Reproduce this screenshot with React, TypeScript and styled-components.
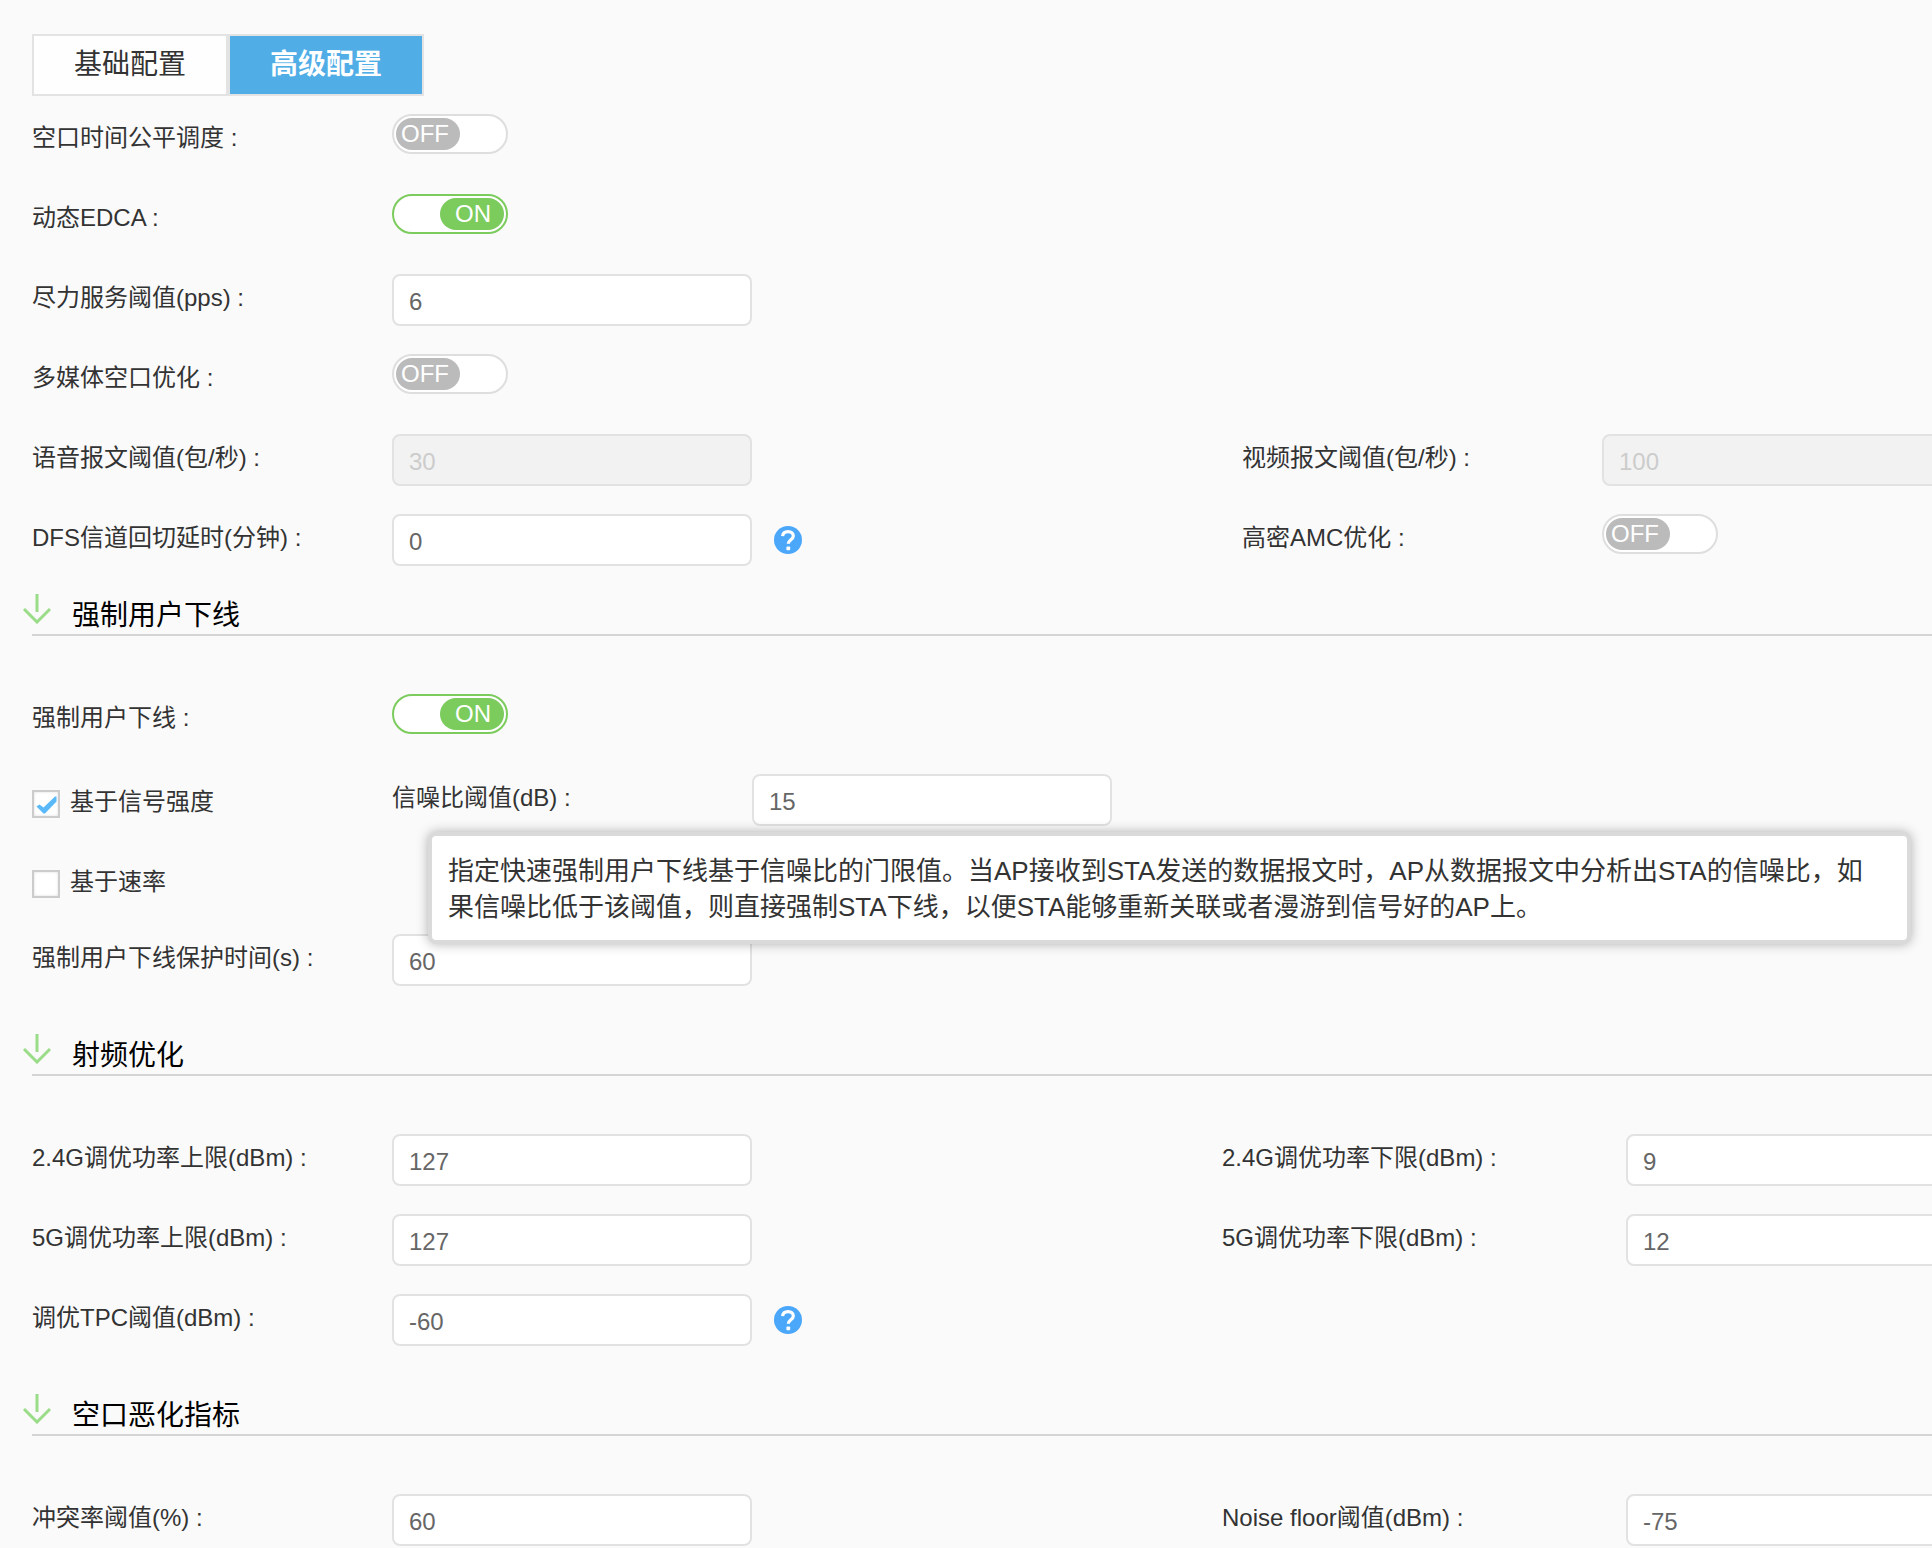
import { useId, useState, type ReactNode } from 'react';
import styled, { createGlobalStyle } from 'styled-components';

const GlobalStyle = createGlobalStyle`
  *, *::before, *::after { box-sizing: border-box; }
  html { min-height: 100%; background: #fafafa; }
  body {
    margin: 0;
    overflow-x: hidden;
    color: #333;
    font-family: "Liberation Sans", "Noto Sans CJK SC", sans-serif;
    font-size: 24px;
    line-height: 36px;
  }
  button, input { font: inherit; }
`;

const Page = styled.main`
  padding: 34px 0 0 32px;
  overflow: hidden;
`;

const Tabs = styled.nav`
  display: flex;
  margin-bottom: 18px;
`;

const Tab = styled.button<{ $active?: boolean }>`
  width: 196px;
  height: 62px;
  padding: 0;
  border: 2px solid #e3e3e3;
  background: ${(p) => (p.$active ? '#51ade6' : '#fefefe')};
  color: ${(p) => (p.$active ? '#fff' : '#333')};
  font-size: 28px;
  font-weight: ${(p) => (p.$active ? 700 : 400)};
  cursor: pointer;
`;

const Row = styled.div<{ $columns?: string }>`
  display: grid;
  grid-template-columns: ${(p) => p.$columns ?? '121fr 69fr'};
  height: 80px;
`;

const FieldBox = styled.div<{ $labelWidth: number }>`
  display: grid;
  grid-template-columns: ${(p) => p.$labelWidth}px auto;
  justify-content: start;
  align-items: start;
  min-width: 0;
`;

const FieldLabel = styled.label`
  line-height: 48px;
  white-space: nowrap;
`;

const Controls = styled.div`
  display: flex;
  align-items: center;
  gap: 22px;
`;

const TextInput = styled.input`
  flex: none;
  width: 360px;
  height: 52px;
  padding: 4px 15px 0;
  border: 2px solid #e2e2e2;
  border-radius: 8px;
  outline: none;
  background: #fff;
  color: #666;
  &:disabled {
    background: #f2f2f2;
    color: #ccc;
  }
`;

const SwitchTrack = styled.button<{ $on: boolean }>`
  display: flex;
  justify-content: ${(p) => (p.$on ? 'flex-end' : 'flex-start')};
  width: 116px;
  height: 40px;
  padding: 2px;
  border: 2px solid ${(p) => (p.$on ? '#7bcb5d' : '#dedede')};
  border-radius: 20px;
  background: #fff;
  cursor: pointer;
`;

const SwitchKnob = styled.span<{ $on: boolean }>`
  width: 64px;
  height: 32px;
  padding-left: ${(p) => (p.$on ? 15 : 5)}px;
  border-radius: 16px;
  background: ${(p) => (p.$on ? '#7bcb5d' : '#bbb')};
  color: #fff;
  line-height: 32px;
  text-align: left;
`;

const HelpButton = styled.button`
  display: flex;
  padding: 0;
  border: 0;
  background: none;
  cursor: pointer;
`;

const SectionHead = styled.h2<{ $gap: number }>`
  display: flex;
  align-items: flex-start;
  gap: 20px;
  height: 42px;
  margin: ${(p) => p.$gap}px 0 58px;
  border-bottom: 2px solid #d4d4d4;
  color: #000;
  font-size: 28px;
  font-weight: 400;
  line-height: 43px;
  svg { flex: none; margin-left: -10px; }
`;

const CheckLabel = styled.label`
  display: flex;
  align-items: center;
  gap: 10px;
  width: 360px;
  height: 28px;
  margin-top: 16px;
  cursor: pointer;
`;

const CheckBox = styled.span`
  position: relative;
  width: 28px;
  height: 28px;
  border: 2px solid #ccc;
  background: #fff;
  box-shadow: inset 0 0 3px #ddd;
  input {
    position: absolute;
    inset: 0;
    width: 100%;
    height: 100%;
    margin: 0;
    opacity: 0;
  }
  svg { display: none; }
  input:checked + svg { display: block; }
`;

const CheckText = styled.span`
  line-height: 28px;
  padding-bottom: 4px;
`;

const CheckRow = styled.div`
  position: relative;
  display: flex;
  align-items: flex-start;
  height: 80px;
`;

const Tooltip = styled.div`
  position: absolute;
  z-index: 1;
  top: 58px;
  left: 396px;
  right: 21px;
  padding: 17px 20px 15px 16px;
  border: 4px solid #dadada;
  border-radius: 8px;
  background: #fff;
  box-shadow: 0 0 12px rgba(0, 0, 0, 0.3);
  font-size: 26px;
`;

function Field({ label, labelWidth = 360, children }: { label: string; labelWidth?: number; children: (id: string) => ReactNode }) {
  const id = useId();
  return (
    <FieldBox $labelWidth={labelWidth}>
      <FieldLabel htmlFor={id}>{label} :</FieldLabel>
      <Controls>{children(id)}</Controls>
    </FieldBox>
  );
}

function InputField({ label, value, labelWidth, disabled, help }: { label: string; value: string; labelWidth?: number; disabled?: boolean; help?: boolean }) {
  return (
    <Field label={label} labelWidth={labelWidth}>
      {(id) => (
        <>
          <TextInput id={id} type="text" defaultValue={value} disabled={disabled} />
          {help && <Help />}
        </>
      )}
    </Field>
  );
}

function SwitchField({ label, initial = false }: { label: string; initial?: boolean }) {
  const [on, setOn] = useState(initial);
  return (
    <Field label={label}>
      {(id) => (
        <SwitchTrack id={id} type="button" role="switch" aria-checked={on} $on={on} onClick={() => setOn(!on)}>
          <SwitchKnob $on={on}>{on ? 'ON' : 'OFF'}</SwitchKnob>
        </SwitchTrack>
      )}
    </Field>
  );
}

function Help() {
  return (
    <HelpButton type="button" aria-label="帮助">
      <svg width="28" height="28" viewBox="0 0 28 28" fill="none">
        <circle cx="14" cy="14" r="14" fill="#4ba7f9" />
        <path d="M8.6 10.2C8.8 7.2 11 5.6 14.1 5.6c3.2 0 5.2 1.8 5.2 4.3 0 3.8-5 3.8-5 7.9" stroke="#fff" strokeWidth="3.2" />
        <rect x="12.4" y="20.4" width="3.8" height="3.8" rx="1" fill="#fff" />
      </svg>
    </HelpButton>
  );
}

function Section({ title, gap = 0 }: { title: string; gap?: number }) {
  return (
    <SectionHead $gap={gap}>
      <svg width="30" height="30" viewBox="0 0 30 30" fill="none" stroke="#9bdc88" strokeWidth="3">
        <path d="M15 0v18M2 15l13 13 13-13" />
      </svg>
      {title}
    </SectionHead>
  );
}

function Check({ label, checked }: { label: string; checked?: boolean }) {
  return (
    <CheckLabel>
      <CheckBox>
        <input type="checkbox" defaultChecked={checked} />
        <svg width="24" height="24" viewBox="0 0 24 24" fill="#5ab9f8">
          <path d="M2.5 14.5L5.5 12.5L9.5 15.5L21 4.5H22.5V9.5L11 21.5H9.5Z" />
        </svg>
      </CheckBox>
      <CheckText>{label}</CheckText>
    </CheckLabel>
  );
}

const powerColumns = '119fr 71fr';

export default function App() {
  const [tab, setTab] = useState(1);
  return (
    <>
      <GlobalStyle />
      <Page>
        <Tabs>
          {['基础配置', '高级配置'].map((name, i) => (
            <Tab key={name} type="button" $active={tab === i} onClick={() => setTab(i)}>
              {name}
            </Tab>
          ))}
        </Tabs>

        <Row><SwitchField label="空口时间公平调度" /></Row>
        <Row><SwitchField label="动态EDCA" initial /></Row>
        <Row><InputField label="尽力服务阈值(pps)" value="6" /></Row>
        <Row><SwitchField label="多媒体空口优化" /></Row>
        <Row>
          <InputField label="语音报文阈值(包/秒)" value="30" disabled />
          <InputField label="视频报文阈值(包/秒)" value="100" disabled />
        </Row>
        <Row>
          <InputField label="DFS信道回切延时(分钟)" value="0" help />
          <SwitchField label="高密AMC优化" />
        </Row>

        <Section title="强制用户下线" />
        <Row><SwitchField label="强制用户下线" initial /></Row>
        <CheckRow>
          <Check label="基于信号强度" checked />
          <InputField label="信噪比阈值(dB)" value="15" />
          <Tooltip role="tooltip">
            指定快速强制用户下线基于信噪比的门限值。当AP接收到STA发送的数据报文时，AP从数据报文中分析出STA的信噪比，如果信噪比低于该阈值，则直接强制STA下线，以便STA能够重新关联或者漫游到信号好的AP上。
          </Tooltip>
        </CheckRow>
        <CheckRow><Check label="基于速率" /></CheckRow>
        <Row><InputField label="强制用户下线保护时间(s)" value="60" /></Row>

        <Section title="射频优化" gap={20} />
        <Row $columns={powerColumns}>
          <InputField label="2.4G调优功率上限(dBm)" value="127" />
          <InputField label="2.4G调优功率下限(dBm)" value="9" labelWidth={404} />
        </Row>
        <Row $columns={powerColumns}>
          <InputField label="5G调优功率上限(dBm)" value="127" />
          <InputField label="5G调优功率下限(dBm)" value="12" labelWidth={404} />
        </Row>
        <Row><InputField label="调优TPC阈值(dBm)" value="-60" help /></Row>

        <Section title="空口恶化指标" gap={20} />
        <Row $columns={powerColumns}>
          <InputField label="冲突率阈值(%)" value="60" />
          <InputField label="Noise floor阈值(dBm)" value="-75" labelWidth={404} />
        </Row>
      </Page>
    </>
  );
}
